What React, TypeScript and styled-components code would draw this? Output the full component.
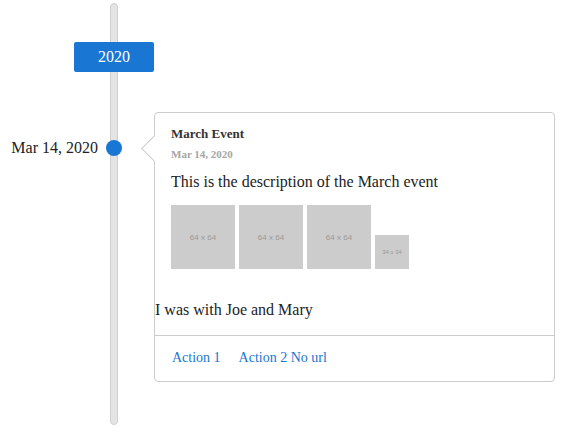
import styled, { createGlobalStyle } from "styled-components";

const GlobalStyle = createGlobalStyle`
  html, body {
    margin: 0;
    padding: 0;
    background: #fff;
  }
  body {
    font-family: "Liberation Serif", "Times New Roman", serif;
    color: #222;
  }
`;

const BLUE = "#1976d2";

const Timeline = styled.div`
  display: grid;
  grid-template-columns: 106px 16px 32px 401px;
  grid-template-rows: 109px auto 43px;
  margin-top: 3px;
`;

// the grey track runs behind every row of the middle column
const Track = styled.div`
  grid-column: 2;
  grid-row: 1 / span 3;
  justify-self: center;
  width: 6px;
  background: #e4e4e4;
  border: 1px solid #d0d0d0;
  border-radius: 4px;
`;

const YearRow = styled.div`
  grid-column: 1 / span 4;
  grid-row: 1;
  padding: 39px 0 0 74px;
  z-index: 1;
`;

const YearBadge = styled.div`
  width: 80px;
  height: 30px;
  background: ${BLUE};
  border-radius: 2px;
  color: #fff;
  font-size: 16px;
  display: flex;
  align-items: center;
  justify-content: center;
`;

const DateLabel = styled.div`
  grid-column: 1;
  grid-row: 2;
  text-align: right;
  padding-right: 8px;
  margin-top: 27px;
  font-size: 16px;
  line-height: 18px;
  color: #222;
`;

const Dot = styled.div`
  grid-column: 2;
  grid-row: 2;
  align-self: start;
  margin-top: 28px;
  width: 16px;
  height: 16px;
  border-radius: 50%;
  background: ${BLUE};
  z-index: 1;
`;

const Card = styled.div`
  grid-column: 4;
  grid-row: 2;
  position: relative;
  border: 1px solid #ccc;
  border-radius: 4px;
  background: #fff;

  &::before {
    content: "";
    position: absolute;
    left: -10px;
    top: 26px;
    width: 18px;
    height: 18px;
    background: #fff;
    border-left: 1px solid #ccc;
    border-bottom: 1px solid #ccc;
    transform: rotate(45deg);
  }
`;

const CardBody = styled.div`
  padding: 13px 16px 0;
`;

const Title = styled.div`
  font-size: 13px;
  line-height: 15px;
  font-weight: bold;
  color: #333;
`;

const Subtitle = styled.div`
  margin-top: 7px;
  font-size: 11px;
  line-height: 13px;
  font-weight: bold;
  color: #a6a6a6;
`;

const Description = styled.p`
  margin: 12px 0 0;
  font-size: 16px;
  line-height: 18px;
  color: #222;
`;

const Media = styled.div`
  display: flex;
  align-items: flex-end;
  gap: 4px;
  margin-top: 14px;
`;

const Placeholder = styled.div<{ $size: number }>`
  width: ${(p) => p.$size}px;
  height: ${(p) => p.$size}px;
  background: #cccccc;
  color: #999;
  font-family: "Liberation Sans", Arial, sans-serif;
  font-size: ${(p) => (p.$size > 40 ? 8 : 6)}px;
  display: flex;
  align-items: center;
  justify-content: center;
`;

const Note = styled.p`
  margin: 32px 0 0;
  padding-bottom: 16px;
  font-size: 16px;
  line-height: 18px;
  color: #222;
`;

const Actions = styled.div`
  display: flex;
  gap: 18px;
  border-top: 1px solid #ccc;
  padding: 14px 17px 15px;
`;

const ActionLink = styled.a`
  font-size: 14px;
  line-height: 16px;
  color: ${BLUE};
  text-decoration: none;
  cursor: pointer;
`;

const images = [64, 64, 64, 34];

const App = () => (
  <>
    <GlobalStyle />
    <Timeline>
      <Track />
      <YearRow>
        <YearBadge>2020</YearBadge>
      </YearRow>
      <DateLabel>Mar 14, 2020</DateLabel>
      <Dot />
      <Card>
        <CardBody>
          <Title>March Event</Title>
          <Subtitle>Mar 14, 2020</Subtitle>
          <Description>This is the description of the March event</Description>
          <Media>
            {images.map((size, i) => (
              <Placeholder key={i} $size={size}>
                {size} x {size}
              </Placeholder>
            ))}
          </Media>
        </CardBody>
        <Note>I was with Joe and Mary</Note>
        <Actions>
          <ActionLink href="#">Action 1</ActionLink>
          <ActionLink>Action 2 No url</ActionLink>
        </Actions>
      </Card>
    </Timeline>
  </>
);

export default App;
